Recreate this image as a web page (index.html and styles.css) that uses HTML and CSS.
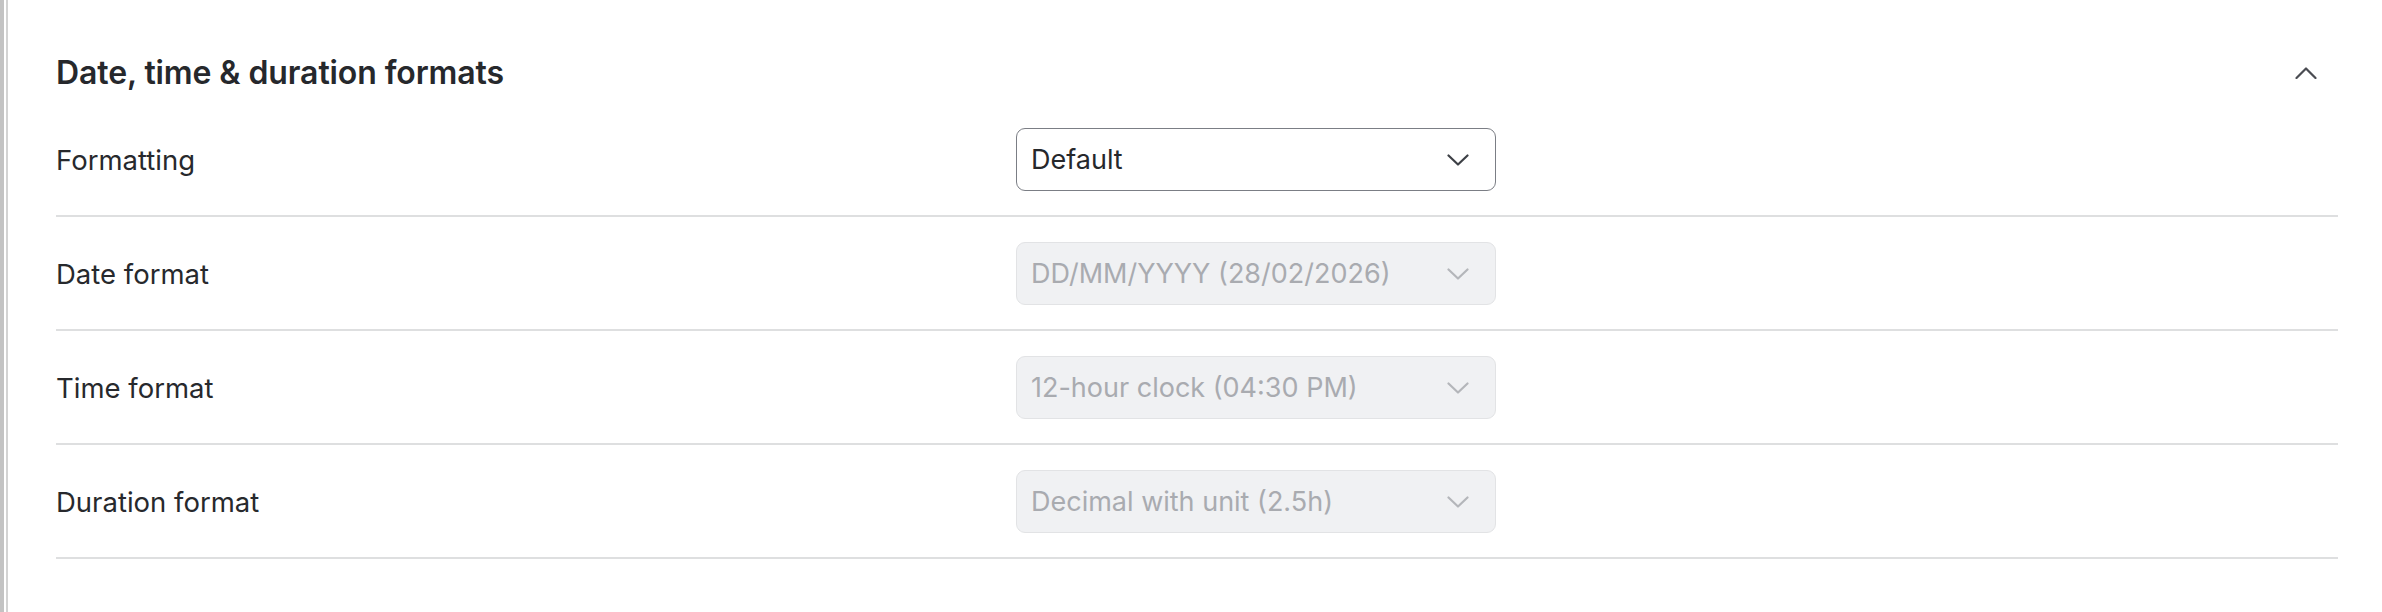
FILE: index.html
```html
<!DOCTYPE html>
<html lang="en">
<head>
<meta charset="utf-8">
<title>Date, time &amp; duration formats</title>
<link rel="stylesheet" href="styles.css">
</head>
<body>
<div class="frame">
  <div class="panel">
    <section class="settings">
      <header class="settings-header">
        <h2 class="settings-title">Date, time &amp; duration formats</h2>
        <button class="collapse-btn" type="button" aria-label="Collapse">
          <svg class="chev-up" width="22" height="12" viewBox="0 0 22 12"><polyline points="1.5,11 11,1.5 20.5,11" fill="none" stroke="currentColor" stroke-width="2.2" stroke-linecap="round" stroke-linejoin="round"/></svg>
        </button>
      </header>
      <div class="rows">
        <div class="row">
          <div class="row-label">Formatting</div>
          <div class="select">
            <span class="select-value">Default</span>
            <svg class="chev-down" width="22" height="12" viewBox="0 0 22 12"><polyline points="1.5,1.5 11,10.5 20.5,1.5" fill="none" stroke="currentColor" stroke-width="2.2" stroke-linecap="round" stroke-linejoin="round"/></svg>
          </div>
        </div>
        <div class="row">
          <div class="row-label">Date format</div>
          <div class="select is-disabled">
            <span class="select-value">DD/MM/YYYY (28/02/2026)</span>
            <svg class="chev-down" width="22" height="12" viewBox="0 0 22 12"><polyline points="1.5,1.5 11,10.5 20.5,1.5" fill="none" stroke="currentColor" stroke-width="2.2" stroke-linecap="round" stroke-linejoin="round"/></svg>
          </div>
        </div>
        <div class="row">
          <div class="row-label">Time format</div>
          <div class="select is-disabled">
            <span class="select-value">12-hour clock (04:30 PM)</span>
            <svg class="chev-down" width="22" height="12" viewBox="0 0 22 12"><polyline points="1.5,1.5 11,10.5 20.5,1.5" fill="none" stroke="currentColor" stroke-width="2.2" stroke-linecap="round" stroke-linejoin="round"/></svg>
          </div>
        </div>
        <div class="row">
          <div class="row-label">Duration format</div>
          <div class="select is-disabled">
            <span class="select-value">Decimal with unit (2.5h)</span>
            <svg class="chev-down" width="22" height="12" viewBox="0 0 22 12"><polyline points="1.5,1.5 11,10.5 20.5,1.5" fill="none" stroke="currentColor" stroke-width="2.2" stroke-linecap="round" stroke-linejoin="round"/></svg>
          </div>
        </div>
      </div>
    </section>
  </div>
</div>
</body>
</html>
```

FILE: styles.css
```css
* { box-sizing: border-box; }

html, body {
  margin: 0;
  padding: 0;
  background: #ffffff;
}

body {
  font-family: Inter, "Noto Sans", "Liberation Sans", sans-serif;
  color: #27292d;
  width: 2382px;
  height: 612px;
  overflow: hidden;
}

.frame {
  height: 612px;
  border-left: 4px solid #c3c3c3;
}

.panel {
  height: 100%;
  margin-left: 2px;
  border-left: 2px solid #d3d3d3;
  padding-left: 48px;
  padding-right: 44px;
}

.settings-header {
  height: 103px;
  display: flex;
  align-items: center;
  justify-content: space-between;
  padding-top: 51px;
  padding-bottom: 9px;
}

.settings-title {
  margin: 0;
  font-size: 32px;
  line-height: 42px;
  font-weight: 600;
  color: #26282c;
  letter-spacing: -0.1px;
}

.collapse-btn {
  border: 0;
  background: none;
  padding: 0;
  margin-right: 21px;
  width: 22px;
  height: 42px;
  display: flex;
  align-items: center;
  justify-content: center;
  color: #4a4c52;
}

.chev-up { display: block; }

.rows {
  display: flex;
  flex-direction: column;
}

.row {
  height: 114px;
  display: grid;
  grid-template-columns: 960px 480px;
  align-items: center;
  border-bottom: 2px solid #dedfe0;
}

.row-label {
  font-size: 27.5px;
  line-height: 38px;
  padding-top: 2px;
  color: #27292d;
}

.select {
  height: 63px;
  display: flex;
  align-items: center;
  justify-content: space-between;
  padding: 0 26px 0 14px;
  border: 1.5px solid #7b7e85;
  border-radius: 9px;
  background: #ffffff;
  color: #26282c;
}

.select-value {
  font-size: 27px;
  line-height: 38px;
  padding-top: 2px;
}

.chev-down {
  display: block;
  color: #3d4046;
  margin-top: 2px;
}

.select.is-disabled {
  background: #f0f1f3;
  border-color: #e2e3e5;
  color: #a9abb0;
}

.select.is-disabled .chev-down {
  color: #b4b6ba;
}
```
